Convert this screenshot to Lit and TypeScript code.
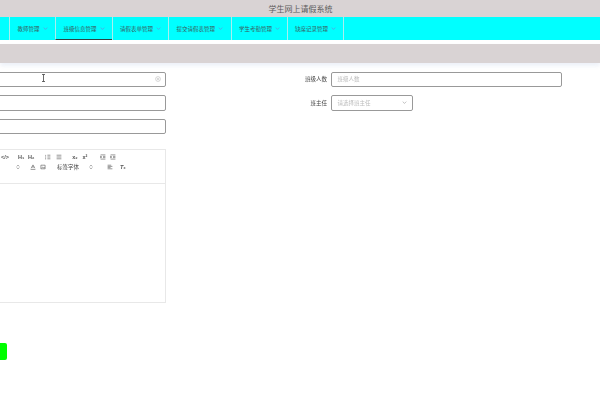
import { LitElement, html, css } from "lit";
import { customElement } from "lit/decorators.js";

const chevron = html`<svg class="chev" viewBox="0 0 8 5"><path d="M1 1l3 3 3-3" fill="none" stroke="currentColor" stroke-width="1.4"/></svg>`;
const ico = (d: string) => html`<svg class="ico" viewBox="0 0 10 10"><path d=${d} fill="none" stroke="#555" stroke-width="1"/></svg>`;
const listA = "M4 2h5M4 5h5M4 8h5M1 1.5v1.5M1 4v2M1 7v2";
const listB = "M1 2h8M1 5h8M1 8h8";
const indent = "M1 1.5h8M5 4h4M5 6h4M1 8.5h8M1 3.5v3l2-1.5z";
const updown = "M3 4l2-2 2 2M3 6l2 2 2-2";
const align = "M1 2h6M1 4h8M1 6h5M1 8h8";

@customElement("app-root")
export class AppRoot extends LitElement {
  static styles = css`
    :host { display: block; width: 600px; height: 400px; overflow: hidden; background: #fff; position: relative;
      font-family: "Noto Sans CJK SC", "Liberation Sans", sans-serif; color: #555; }
    .blur { filter: blur(0.4px); height: 400px; }
    .title { height: 17px; background: #d9d3d4; display: flex; align-items: center; justify-content: center; font-size: 8px; color: #5c5c5c; padding-left: 1px; }
    .nav { height: 23px; background: #00ffff; display: flex; padding-left: 9px; font-size: 5.5px; color: #3a5c5c; }
    .nav div { border-left: 1px solid #a8eeee; display: flex; align-items: center; gap: 3px; padding-left: 7.5px; box-sizing: border-box; }
    .nav div:last-child { border-left: 1px solid #a8eeee; padding: 0; width: 1px; }
    .n1 { width: 46px; } .n2 { width: 56.5px; border-bottom: 1.5px solid #2a4444; padding-top: 1px; } .n3 { width: 56.5px; } .n4 { width: 62.5px; } .n5 { width: 56px; } .n6 { width: 56.5px; }
    .chev { width: 5px; height: 3px; color: #5c9fe0; flex: none; }
    .bar { margin-top: 4px; height: 19px; background: #d9d3d4; box-shadow: 0 3px 4px rgba(225, 232, 245, 0.6); }
    .form { margin: 8.5px 0 0 -20px; display: grid; grid-template-columns: 186px 396px; column-gap: 134px; width: 716px; }
    .col { display: flex; flex-direction: column; gap: 8px; }
    .input { height: 15.5px; box-sizing: border-box; border: 1px solid #999; border-radius: 2px; display: flex; align-items: center; justify-content: flex-end; padding: 0 4px; font-size: 5.5px; color: #bbb; }
    .clear { width: 6px; height: 6px; }
    .editor { margin-top: 7px; height: 154px; box-sizing: border-box; border: 1px solid #e8e8e8; display: flex; flex-direction: column; font-size: 5.5px; color: #444; }
    .tools { height: 33.5px; border-bottom: 1px solid #e8e8e8; padding: 4px 0 0 20px; box-sizing: border-box; display: flex; flex-direction: column; gap: 4px; flex: none; }
    .row { display: flex; align-items: center; height: 6px; }
    .ico { width: 6px; height: 6px; flex: none; }
    .t { width: 6px; flex: none; text-align: center; font-size: 5.5px; line-height: 6px; font-family: "Liberation Sans", sans-serif; color: #555; font-weight: 700; }
    .g4 { width: 4px; flex: none; } .g5 { width: 5px; flex: none; } .g10 { width: 10px; flex: none; } .g7 { width: 6.7px; flex: none; } .g9 { width: 9px; flex: none; } .g11 { width: 11px; flex: none; } .g12 { width: 12px; flex: none; } .g13 { width: 13px; flex: none; } .g135 { width: 13.5px; flex: none; } .g115 { width: 11.5px; flex: none; }
    .right { display: flex; flex-direction: column; gap: 8px; }
    .field { display: flex; align-items: center; gap: 4px; font-size: 5.5px; color: #444; margin-left: -6px; }
    .field > span { width: 33px; text-align: right; flex: none; }
    .rinput { width: 231px; justify-content: flex-start; padding-left: 5.5px; }
    .select { width: 82px; justify-content: space-between; padding: 0 5.5px; }
    .select svg { width: 5px; height: 3px; color: #999; }
    .green { margin-top: 40px; width: 7px; height: 17px; background: #00ff00; border-radius: 0 2px 2px 0; }
    .cursor { position: absolute; left: 41px; top: 74px; width: 5px; height: 8px; }
  `;
  render() {
    return html`<div class="blur">
      <div class="title">学生网上请假系统</div>
      <div class="nav">
        <div class="n1">教师管理 ${chevron}</div>
        <div class="n2">班级信息管理 ${chevron}</div>
        <div class="n3">请假表单管理 ${chevron}</div>
        <div class="n4">提交请假表管理 ${chevron}</div>
        <div class="n5">学生考勤管理 ${chevron}</div>
        <div class="n6">缺席记录管理 ${chevron}</div>
        <div></div>
      </div>
      <div class="bar"></div>
      <div class="form">
        <div class="col">
          <div class="input"><svg class="clear" viewBox="0 0 10 10"><circle cx="5" cy="5" r="4" fill="none" stroke="#bbb"/><path d="M3.5 3.5l3 3M6.5 3.5l-3 3" stroke="#bbb"/></svg></div>
          <div class="input"></div>
          <div class="input"></div>
          <div class="editor">
            <div class="tools">
              <div class="row">
                <span class="t">&lt;/&gt;</span><span class="g11"></span>
                <span class="t">H₁</span><span class="g4"></span><span class="t">H₂</span><span class="g11"></span>
                ${ico(listA)}<span class="g5"></span>${ico(listB)}<span class="g10"></span>
                <span class="t">x₂</span><span class="g4"></span><span class="t">x²</span><span class="g12"></span>
                ${ico(indent)}<span class="g4"></span>${ico(indent)}
              </div>
              <div class="row">
                <span class="g135"></span>${ico(updown)}<span class="g9"></span>
                ${ico("M2 7L5 1.5 8 7M3.2 5h3.6M1 9h8")}<span class="g4"></span>${ico("M1.5 2h7v6h-7zM2.5 7l2-2 1.5 1.5 1-1 1 1.5")}
                <span class="g115"></span><span>标签字体</span><span class="g9"></span>${ico(updown)}<span class="g13"></span>${ico(align)}<span class="g7"></span>
                <span class="t"><i>T</i>ₓ</span>
              </div>
            </div>
          </div>
        </div>
        <div class="right">
          <div class="field"><span>班级人数</span><div class="input rinput">班级人数</div></div>
          <div class="field"><span>班主任</span><div class="input select">请选择班主任<svg viewBox="0 0 8 5"><path d="M1 1l3 3 3-3" fill="none" stroke="currentColor"/></svg></div></div>
        </div>
      </div>
      <div class="green"></div>
    </div>
    <svg class="cursor" viewBox="0 0 5 8"><path d="M1 .5h3M2.5 .5v7M1 7.5h3" fill="none" stroke="#444" stroke-width="0.8"/></svg>`;
  }
}
